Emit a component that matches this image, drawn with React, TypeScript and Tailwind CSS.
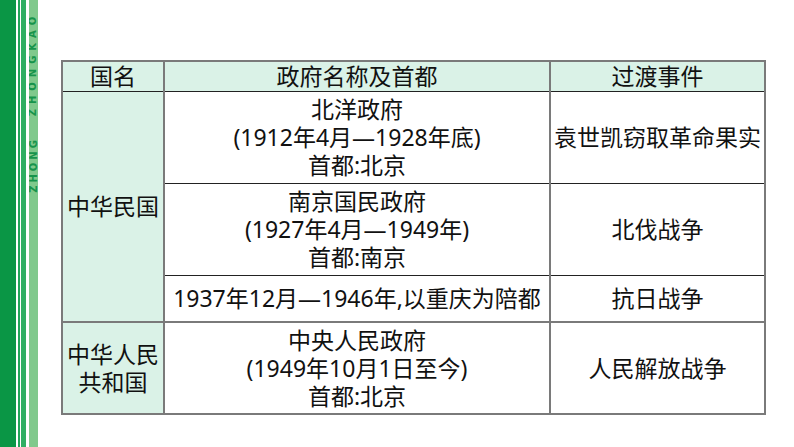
import React from 'react';

const font = { fontFamily: '"Noto Sans", "Noto Sans CJK SC", sans-serif' };

const Stripes: React.FC = () => (
  <div className="flex h-full shrink-0">
    <div className="w-[16px] bg-[#0a9645]" />
    <div className="w-[2px] bg-white" />
    <div className="w-[2px] bg-[#21a55a]" />
    <div className="w-[1px] bg-white" />
    <div className="w-[5px] bg-[#2fae62]" />
    <div className="w-[3px] bg-white" />
    <div className="relative w-[9px] bg-[#80c98c] overflow-hidden">
      <div className="absolute left-0 top-[4px] flex h-[120px] w-[9px] items-center justify-center">
        <span className="block -rotate-90 whitespace-nowrap text-[10px] font-bold leading-none tracking-[5px] text-[#17944b]" style={{ fontFamily: '"DejaVu Sans", sans-serif' }}>
          ZHONGKAO
        </span>
      </div>
      <div className="absolute left-0 top-[135px] flex h-[60px] w-[9px] items-center justify-center">
        <span className="block -rotate-90 whitespace-nowrap text-[10px] font-bold leading-none tracking-[3px] text-[#17944b]" style={{ fontFamily: '"DejaVu Sans", sans-serif' }}>
          ZHONG
        </span>
      </div>
    </div>
  </div>
);

const Lines: React.FC<{ lines: string[] }> = ({ lines }) => (
  <div className="flex flex-col items-center leading-[28px]">
    {lines.map((l) => (
      <span key={l}>{l}</span>
    ))}
  </div>
);

export default function App() {
  const grey = 'border-[#7a7a7a]';
  return (
    <div className="flex h-[447px] w-[794px] bg-white text-[#111]" style={font}>
      <Stripes />
      <div className="pl-[23px] pt-[60px]">
        <table className={`border-collapse border-2 ${grey} text-[23px] leading-[28px]`}>
          <tbody>
            <tr className="h-[30px] bg-[#daf2e7]">
              <td className={`w-[102px] border-r-2 ${grey} border-b border-b-[#222] text-center`}>国名</td>
              <td className={`w-[386px] border-r-2 ${grey} border-b border-b-[#222] text-center`}>政府名称及首都</td>
              <td className="w-[215px] border-b border-b-[#222] text-center">过渡事件</td>
            </tr>
            <tr className="h-[92px]">
              <td rowSpan={3} className={`bg-[#daf2e7] border-r-2 ${grey} border-b-2 border-b-[#7a7a7a] text-center`}>
                中华民国
              </td>
              <td className={`border-r-2 ${grey} border-b border-b-[#222] text-center`}>
                <Lines lines={['北洋政府', '(1912年4月—1928年底)', '首都:北京']} />
              </td>
              <td className="border-b border-b-[#222] text-center">袁世凯窃取革命果实</td>
            </tr>
            <tr className="h-[92px]">
              <td className={`border-r-2 ${grey} border-b border-b-[#222] text-center`}>
                <Lines lines={['南京国民政府', '(1927年4月—1949年)', '首都:南京']} />
              </td>
              <td className="border-b border-b-[#222] text-center">北伐战争</td>
            </tr>
            <tr className="h-[47px]">
              <td className={`border-r-2 ${grey} border-b-2 border-b-[#7a7a7a] text-center`}>
                1937年12月—1946年,以重庆为陪都
              </td>
              <td className="border-b-2 border-b-[#7a7a7a] text-center">抗日战争</td>
            </tr>
            <tr className="h-[92px]">
              <td className={`bg-[#daf2e7] border-r-2 ${grey} text-center`}>
                <Lines lines={['中华人民', '共和国']} />
              </td>
              <td className={`border-r-2 ${grey} text-center`}>
                <Lines lines={['中央人民政府', '(1949年10月1日至今)', '首都:北京']} />
              </td>
              <td className="text-center">人民解放战争</td>
            </tr>
          </tbody>
        </table>
      </div>
    </div>
  );
}
